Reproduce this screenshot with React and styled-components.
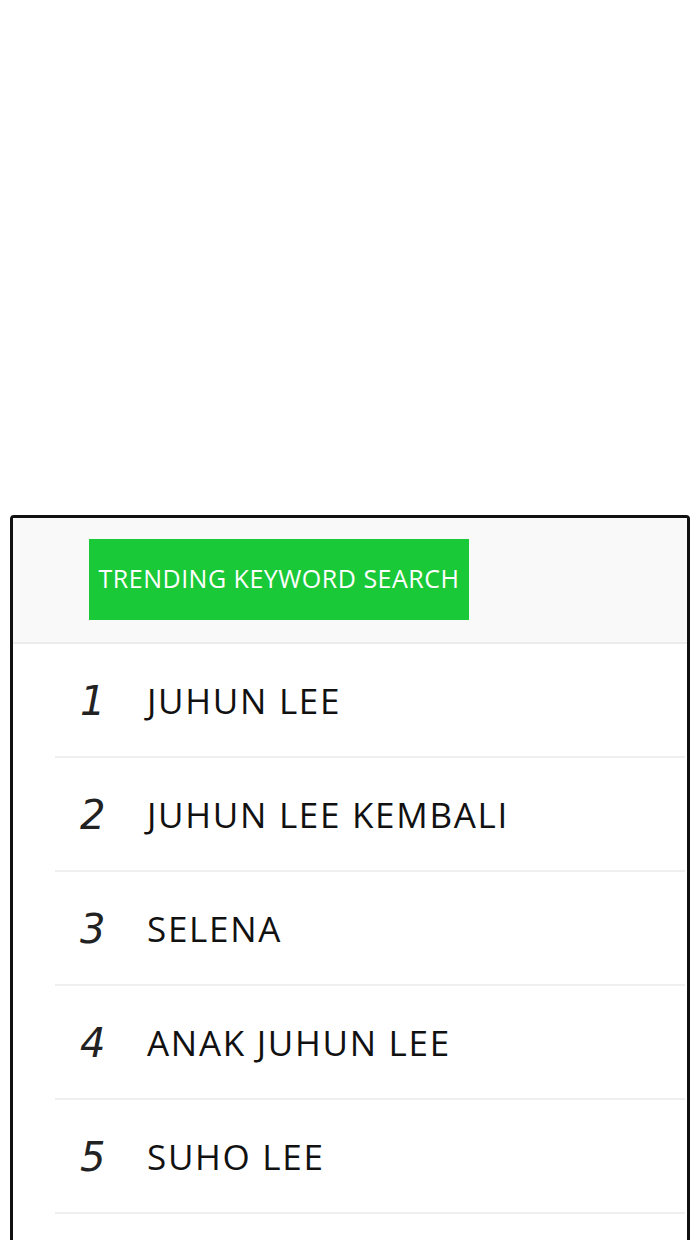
import React from 'react'
import styled, { createGlobalStyle } from 'styled-components'

const GlobalStyle = createGlobalStyle`
    body {
        margin: 0;
        background: #ffffff;
        font-family: "Open Sans", "Noto Sans", sans-serif;
    }
`

const Page = styled.div`
    width: 700px;
    height: 1240px;
    overflow: hidden;
    padding-top: 515px;
    box-sizing: border-box;
`

const Panel = styled.div`
    margin-left: 10px;
    width: 680px;
    height: 760px;
    box-sizing: border-box;
    border: 3px solid #111;
    border-radius: 4px;
    background: #fff;
`

const Header = styled.div`
    height: 103px;
    background: #f9f9f9;
    border-bottom: 2px solid #ececec;
    padding: 21px 0 0 76px;
`

const Badge = styled.div`
    display: inline-flex;
    align-items: center;
    justify-content: center;
    width: 380px;
    height: 81px;
    background: #19c937;
    color: #fff;
    font-size: 25px;
    letter-spacing: 0.5px;
    padding-bottom: 4px;
    box-sizing: border-box;
`

const List = styled.div`
    display: flex;
    flex-direction: column;
`

const Row = styled.div`
    display: flex;
    align-items: center;
    height: 112px;
    margin: 0 2px 0 42px;
    border-bottom: 2px solid #efefef;
`

const Rank = styled.span`
    width: 92px;
    padding-left: 25px;
    box-sizing: border-box;
    font-family: "DejaVu Sans", sans-serif;
    font-style: italic;
    font-size: 40px;
    color: #222;
    padding-top: 2px;
`

const Keyword = styled.span`
    font-size: 35px;
    color: #111;
    letter-spacing: 1.7px;
`

const keywords = ['JUHUN LEE', 'JUHUN LEE KEMBALI', 'SELENA', 'ANAK JUHUN LEE', 'SUHO LEE']

export default function App() {
    return (
        <Page>
            <GlobalStyle />
            <Panel>
                <Header>
                    <Badge>TRENDING KEYWORD SEARCH</Badge>
                </Header>
                <List>
                    {keywords.map((k, i) => (
                        <Row key={k}>
                            <Rank>{i + 1}</Rank>
                            <Keyword>{k}</Keyword>
                        </Row>
                    ))}
                </List>
            </Panel>
        </Page>
    )
}
